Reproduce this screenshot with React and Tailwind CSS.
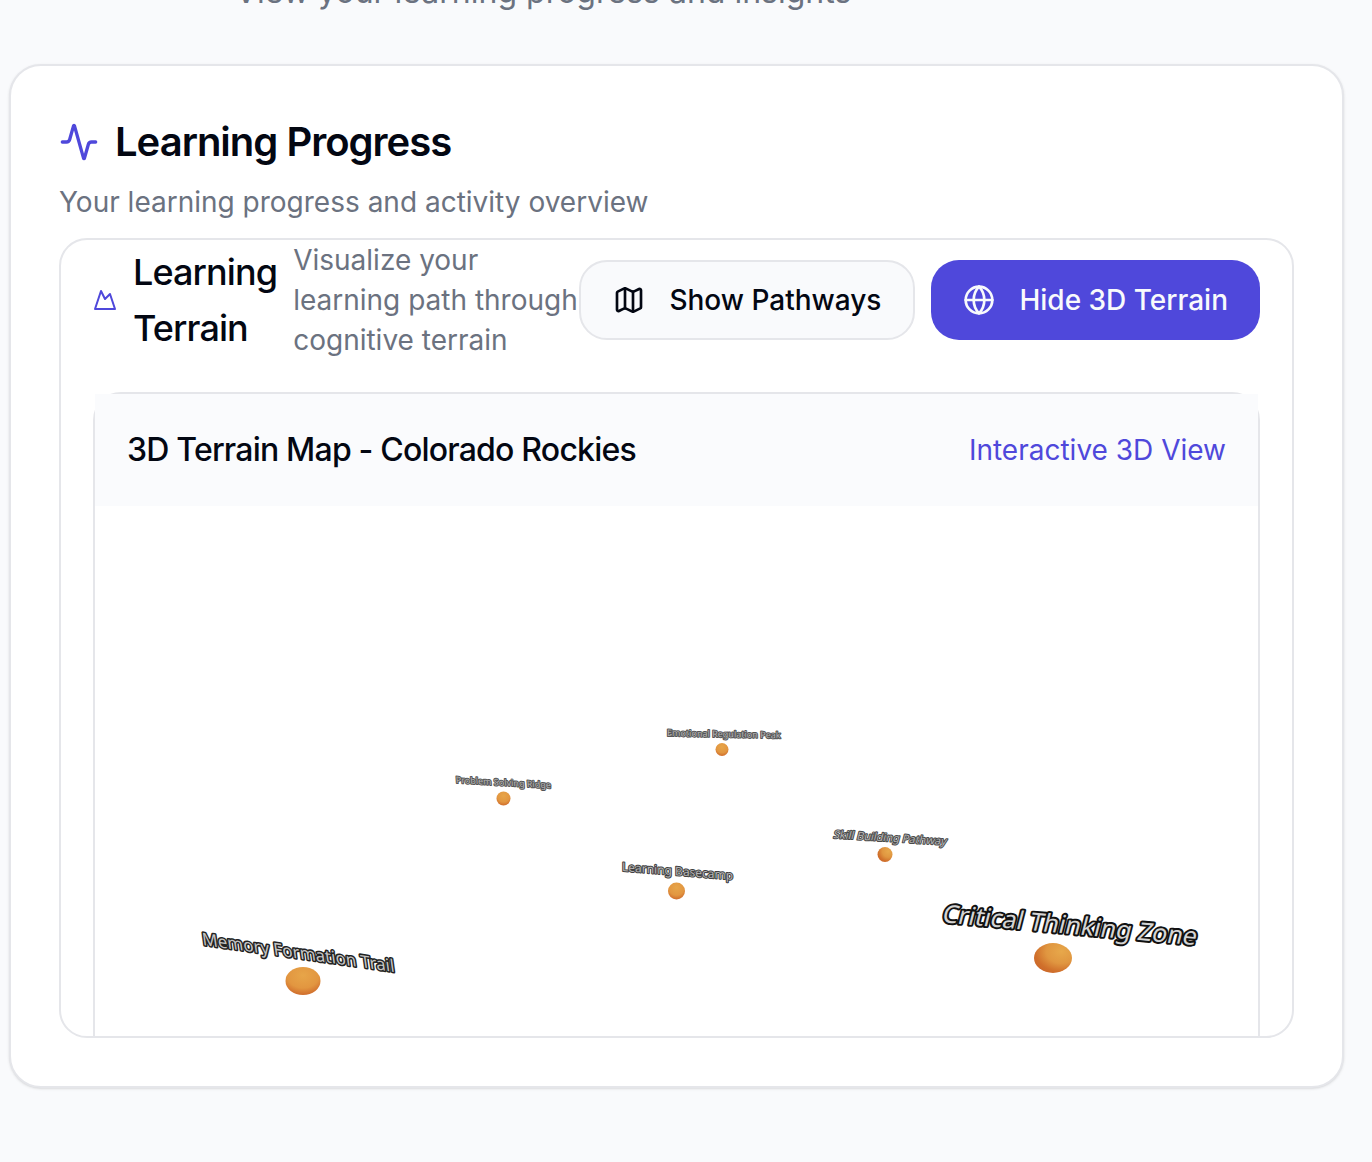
import React from "react";
import { Activity, Globe, Map as MapIcon, Mountain } from "lucide-react";

const places = [
  { name: "Emotional Regulation Peak", x: 572, y: 230, size: 9, turn: 1.2, lean: 0, edge: 2, ink: "#555555", fill: "#b4b4b4", cx: 627, cy: 243.5, rx: 6.5, ry: 6.5, shade: "shadeBelow" },
  { name: "Problem Solving Ridge", x: 361, y: 277, size: 9, turn: 3.2, lean: 4, edge: 2, ink: "#555555", fill: "#b4b4b4", cx: 408.5, cy: 292.5, rx: 7, ry: 7, shade: "shadeBelow" },
  { name: "Skill Building Pathway", x: 738, y: 332, size: 11, turn: 3.6, lean: -14, edge: 2, ink: "#4a4a4a", fill: "#b4b4b4", cx: 790, cy: 348.5, rx: 7.5, ry: 7.5, shade: "shadeLeft" },
  { name: "Learning Basecamp", x: 527, y: 365, size: 12, turn: 4.5, lean: 0, edge: 2, ink: "#404040", fill: "#b4b4b4", cx: 581.5, cy: 385, rx: 8.5, ry: 8.5, shade: "shadeBelow" },
  { name: "Memory Formation Trail", x: 108, y: 439, size: 17, turn: 8, lean: 8, edge: 3, ink: "#222222", fill: "#c4c4c4", cx: 208, cy: 475, rx: 17.5, ry: 14, shade: "shadeBelow" },
  { name: "Critical Thinking Zone", x: 846, y: 416, size: 25, turn: 5.2, lean: -14, edge: 4, ink: "#111111", fill: "#d4d4d4", cx: 958, cy: 452, rx: 19, ry: 15, shade: "shadeLeft" },
];

function TerrainScene() {
  return (
    <svg viewBox="0 0 1163 600" className="block w-full" role="img" aria-label="3D terrain map">
      <defs>
        <radialGradient id="shadeBelow" cx="50%" cy="30%" r="75%">
          <stop offset="0" stopColor="#e7a549" />
          <stop offset="0.6" stopColor="#e29640" />
          <stop offset="1" stopColor="#cc6427" />
        </radialGradient>
        <radialGradient id="shadeLeft" cx="72%" cy="28%" r="80%">
          <stop offset="0" stopColor="#e7a84b" />
          <stop offset="0.5" stopColor="#e09640" />
          <stop offset="0.85" stopColor="#d0702b" />
          <stop offset="1" stopColor="#cc692a" />
        </radialGradient>
      </defs>
      {places.map((p) => (
        <g key={p.name}>
          <ellipse cx={p.cx} cy={p.cy} rx={p.rx} ry={p.ry} fill={`url(#${p.shade})`} />
          <text
            transform={`translate(${p.x} ${p.y}) skewY(${p.turn}) skewX(${p.lean})`}
            fontSize={p.size}
            strokeWidth={p.edge}
            fill={p.fill}
            stroke={p.ink}
            className="font-['Noto_Sans',sans-serif] [paint-order:stroke] [stroke-linejoin:round]"
          >
            {p.name}
          </text>
        </g>
      ))}
    </svg>
  );
}

export default function App() {
  return (
    <div className="min-h-screen overflow-hidden bg-[#f9fafc] pr-7 pb-[74px] pl-[9px] font-[Inter,sans-serif] text-[28px] leading-10 text-[#030712] [font-optical-sizing:none]">
      <p className="-mt-8 mb-12 pl-[226px] text-[32px] leading-[48px] text-[#6b7280]">
        View your learning progress and insights
      </p>

      <main className="rounded-[32px] border-2 border-[#e5e6ea] bg-white p-12 shadow-sm">
        <header className="mb-4 flex flex-col gap-3">
          <h1 className="flex items-center gap-4 text-[40px] leading-[56px] font-semibold tracking-tight">
            <Activity className="size-10 text-[#4f48db]" />
            Learning Progress
          </h1>
          <p className="text-[#6b7280]">Your learning progress and activity overview</p>
        </header>

        <section className="h-[800px] overflow-hidden rounded-[28px] border-2 border-[#e5e6ea] px-8">
          <div className="mb-8 flex items-center justify-between">
            <div className="flex min-w-0 flex-1 items-center gap-4">
              <Mountain className="size-6 shrink-0 text-[#4f48db]" />
              <h2 className="w-min text-[36px] leading-[56px] font-medium tracking-tight">Learning Terrain</h2>
              <p className="flex-1 text-[#6b7280]">Visualize your learning path through cognitive terrain</p>
            </div>
            <div className="flex shrink-0 gap-4 font-medium">
              <button type="button" className="flex h-20 items-center gap-6 rounded-[28px] border-2 border-[#e5e6ea] bg-[#f9fafc] px-8">
                <MapIcon className="size-8" />
                Show Pathways
              </button>
              <button type="button" className="flex h-20 items-center gap-6 rounded-[28px] bg-[#4f48db] px-8 text-[#f8fafc]">
                <Globe className="size-8" />
                Hide 3D Terrain
              </button>
            </div>
          </div>

          <div className="rounded-[28px] border-2 border-[#e5e6ea]">
            <div className="flex items-center justify-between bg-[#fafbfd] p-8">
              <h3 className="text-[32px] leading-[48px] font-medium tracking-tight">3D Terrain Map - Colorado Rockies</h3>
              <span className="text-[#4f48db]">Interactive 3D View</span>
            </div>
            <TerrainScene />
          </div>
        </section>
      </main>
    </div>
  );
}
